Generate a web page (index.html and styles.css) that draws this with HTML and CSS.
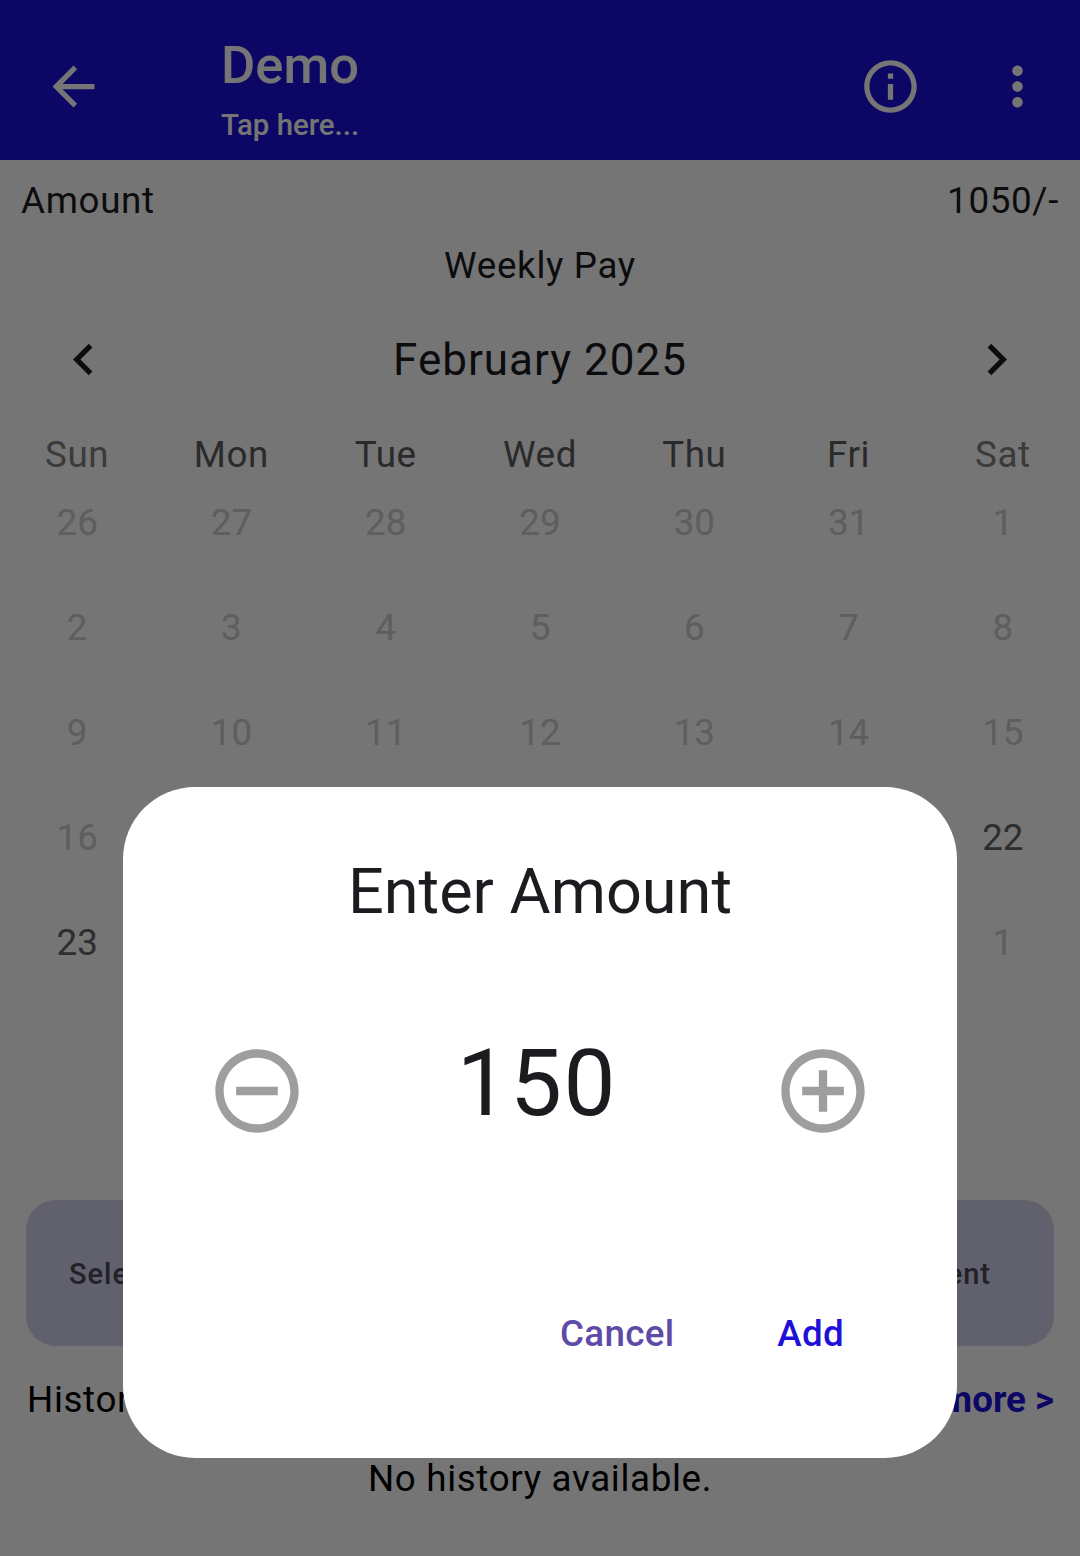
FILE: index.html
```html
<!DOCTYPE html>
<html>
    <head>
        <meta charset="utf-8">
        <title>Demo</title>
        <link rel="stylesheet" href="styles.css">
    </head>
    <body>
        <div class="page">
            <header class="appbar">
                <svg class="icon back" viewBox="0 0 24 24"><path d="M20 11H7.83l5.59-5.59L12 4l-8 8 8 8 1.41-1.41L7.83 13H20v-2z"/></svg>
                <div class="titles">
                    <div class="title">Demo</div>
                    <div class="subtitle">Tap here...</div>
                </div>
                <svg class="icon info" viewBox="0 0 24 24"><path d="M11 7h2v2h-2zm0 4h2v6h-2zm1-9C6.48 2 2 6.48 2 12s4.48 10 10 10 10-4.48 10-10S17.52 2 12 2zm0 18c-4.41 0-8-3.59-8-8s3.59-8 8-8 8 3.59 8 8-3.59 8-8 8z"/></svg>
                <svg class="icon more" viewBox="0 0 24 24"><path d="M12 8c1.1 0 2-.9 2-2s-.9-2-2-2-2 .9-2 2 .9 2 2 2zm0 2c-1.1 0-2 .9-2 2s.9 2 2 2 2-.9 2-2-.9-2-2-2zm0 6c-1.1 0-2 .9-2 2s.9 2 2 2 2-.9 2-2-.9-2-2-2z"/></svg>
            </header>

            <div class="amount-row">
                <span>Amount</span>
                <span>1050/-</span>
            </div>
            <div class="pay-type">Weekly Pay</div>

            <div class="month-row">
                <svg class="icon chevron" viewBox="0 0 24 24"><path d="M15.41 7.41L14 6l-6 6 6 6 1.41-1.41L10.83 12z"/></svg>
                <span class="month">February 2025</span>
                <svg class="icon chevron" viewBox="0 0 24 24"><path d="M10 6L8.59 7.41 13.17 12l-4.58 4.59L10 18l6-6z"/></svg>
            </div>

            <div class="weekdays">
                <span class="weekend">Sun</span><span>Mon</span><span>Tue</span><span>Wed</span><span>Thu</span><span>Fri</span><span class="weekend">Sat</span>
            </div>
            <div class="days">
                <span class="off">26</span><span class="off">27</span><span class="off">28</span><span class="off">29</span><span class="off">30</span><span class="off">31</span><span class="off">1</span>
                <span class="off">2</span><span class="off">3</span><span class="off">4</span><span class="off">5</span><span class="off">6</span><span class="off">7</span><span class="off">8</span>
                <span class="off">9</span><span class="off">10</span><span class="off">11</span><span class="off">12</span><span class="off">13</span><span class="off">14</span><span class="off">15</span>
                <span class="off">16</span><span class="off">17</span><span class="off">18</span><span class="off">19</span><span class="off">20</span><span class="off">21</span><span>22</span>
                <span>23</span><span></span><span></span><span></span><span></span><span></span><span class="off">1</span>
            </div>

            <div class="pay-bar">
                <span>Select Date</span>
                <span>Add Payment</span>
            </div>

            <div class="history-row">
                <span>History</span>
                <span class="view-more">View more &gt;</span>
            </div>
            <div class="no-history">No history available.</div>
        </div>

        <div class="scrim">
            <div class="dialog">
                <h2 class="dialog-title">Enter Amount</h2>
                <div class="stepper">
                    <svg class="step" viewBox="0 0 24 24"><path d="M7 11v2h10v-2H7zm5-9C6.48 2 2 6.48 2 12s4.48 10 10 10 10-4.48 10-10S17.52 2 12 2zm0 18c-4.41 0-8-3.59-8-8s3.59-8 8-8 8 3.59 8 8-3.59 8-8 8z"/></svg>
                    <span class="value">150</span>
                    <svg class="step" viewBox="0 0 24 24"><path d="M13 7h-2v4H7v2h4v4h2v-4h4v-2h-4V7zm-1-5C6.48 2 2 6.48 2 12s4.48 10 10 10 10-4.48 10-10S17.52 2 12 2zm0 18c-4.41 0-8-3.59-8-8s3.59-8 8-8 8 3.59 8 8-3.59 8-8 8z"/></svg>
                </div>
                <div class="actions">
                    <span class="cancel">Cancel</span>
                    <span class="add">Add</span>
                </div>
            </div>
        </div>
    </body>
</html>
```

FILE: styles.css
```css
html, body {
    margin: 0;
    padding: 0;
}

body {
    width: 1080px;
    height: 1556px;
    overflow: hidden;
    position: relative;
    background: #ffffff;
    color: #1c1b1f;
    font-family: Roboto, sans-serif;
}

.icon {
    width: 63px;
    height: 63px;
    flex: none;
    fill: currentColor;
}

.appbar {
    height: 160px;
    display: flex;
    align-items: center;
    background: #1c0fd9;
    color: #ffffff;
}

.back {
    margin-left: 42px;
    margin-top: 12px;
}

.titles {
    margin-left: 116px;
    flex: 1;
}

.title {
    font-size: 52.5px;
    font-weight: 500;
    line-height: 56px;
    margin-top: 18px;
}

.subtitle {
    font-size: 29.4px;
    font-weight: 500;
    line-height: 34px;
    margin-top: 15px;
}

.info {
    margin-top: 12px;
    margin-right: -1px;
}

.more {
    margin: 12px 31px 0 65px;
}

.amount-row {
    height: 80px;
    padding: 0 21px;
    display: flex;
    justify-content: space-between;
    align-items: center;
    font-size: 36.75px;
    letter-spacing: 0.66px;
}

.pay-type {
    height: 50px;
    margin-top: 1px;
    line-height: 50px;
    text-align: center;
    font-size: 36.75px;
    letter-spacing: 0.66px;
}

.month-row {
    height: 63px;
    margin-top: 37px;
    padding: 0 52px;
    display: flex;
    justify-content: space-between;
    align-items: center;
}

.month {
    font-size: 44px;
    letter-spacing: 1px;
}

.weekdays, .days {
    display: grid;
    grid-template-columns: repeat(7, 1fr);
    text-align: center;
}

.weekdays {
    margin-top: 40px;
    height: 48px;
    line-height: 48px;
    font-size: 36.75px;
    letter-spacing: 0.6px;
    color: #5c5c5c;
}

.weekdays .weekend {
    color: #808080;
}

.days {
    grid-auto-rows: 105px;
    margin-top: -9px;
    font-size: 36.75px;
    line-height: 105px;
    color: #646464;
}

.days .off {
    color: #cccccc;
}

.pay-bar {
    margin: 205px 26px 0;
    height: 146px;
    box-sizing: border-box;
    padding: 2px 63px 0 43px;
    display: flex;
    justify-content: space-between;
    align-items: center;
    border-radius: 30px;
    background: #d3d3ef;
    color: #4a4855;
    font-size: 29px;
    font-weight: 500;
    letter-spacing: 1px;
}

.history-row {
    margin-top: 29px;
    padding: 0 26px 0 27px;
    height: 48px;
    display: flex;
    justify-content: space-between;
    align-items: center;
    color: #000000;
    font-size: 36.75px;
    letter-spacing: 0.66px;
}

.view-more {
    color: #1c0fd9;
    font-size: 36.75px;
    font-weight: 700;
    letter-spacing: 0;
}

.no-history {
    margin-top: 34px;
    height: 44px;
    line-height: 44px;
    text-align: center;
    font-size: 36.75px;
    letter-spacing: 0.66px;
    color: #000000;
}

.scrim {
    position: absolute;
    inset: 0;
    box-sizing: border-box;
    padding: 787px 123px 98px;
    background: rgba(0, 0, 0, 0.54);
}

.dialog {
    height: 100%;
    background: #ffffff;
    border-radius: 72px;
    display: flex;
    flex-direction: column;
}

.dialog-title {
    margin: 65px 0 0;
    text-align: center;
    font-size: 63px;
    font-weight: 400;
    line-height: 80px;
    color: #1c1b1f;
}

.stepper {
    margin-top: 99px;
    padding: 0 83.5px 0 84px;
    height: 120px;
    display: flex;
    justify-content: space-between;
    align-items: center;
}

.step {
    width: 100px;
    height: 100px;
    fill: #9e9e9e;
}

.value {
    font-size: 92.5px;
    line-height: 108px;
    margin-top: -14px;
    margin-left: -7px;
    letter-spacing: 1.3px;
    color: #1c1b1f;
}

.actions {
    margin-top: auto;
    margin-bottom: 102px;
    padding-right: 113px;
    display: flex;
    justify-content: flex-end;
    gap: 103px;
    font-size: 36.75px;
    font-weight: 500;
    letter-spacing: 0.3px;
    line-height: 44px;
}

.cancel {
    color: #5e4ba8;
}

.add {
    color: #1f10d9;
}
```
